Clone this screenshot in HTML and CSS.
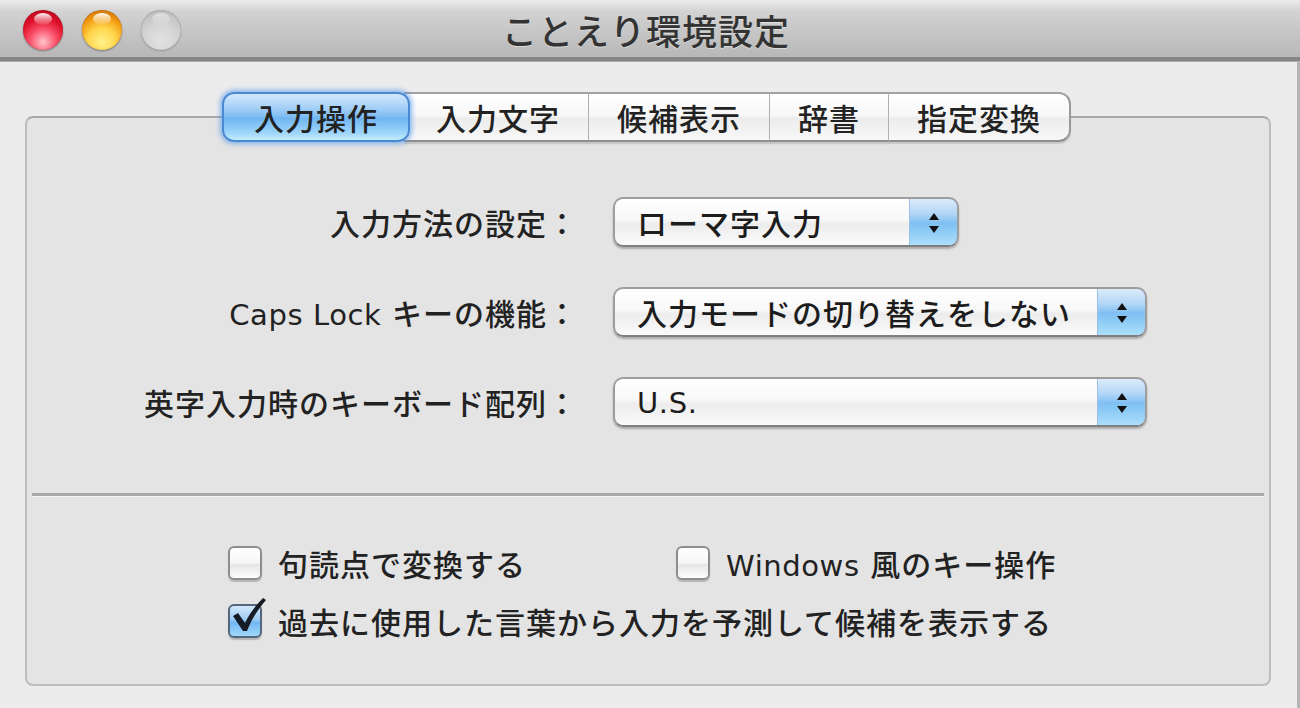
FILE: index.html
```html
<!DOCTYPE html>
<html lang="ja">
<head>
<meta charset="utf-8">
<title>ことえり環境設定</title>
<link rel="stylesheet" href="styles.css">
</head>
<body>
<div class="window">
  <div class="titlebar">
    <div class="lights">
      <span class="light red"></span>
      <span class="light yellow"></span>
      <span class="light grey"></span>
    </div>
    <div class="title">ことえり環境設定</div>
    <div class="spacer"></div>
  </div>
  <div class="content">
    <div class="tabs">
      <div class="tab active">入力操作</div>
      <div class="tab">入力文字</div>
      <div class="tab">候補表示</div>
      <div class="tab">辞書</div>
      <div class="tab last">指定変換</div>
    </div>
    <div class="box">
      <div class="form">
        <div class="label">入力方法の設定：</div>
        <div class="popup short">
          <span class="value">ローマ字入力</span>
          <span class="stepper"><svg viewBox="0 0 14 28" width="14" height="28"><path d="M7 4 L12 11 L2 11 Z M7 24 L12 17 L2 17 Z" fill="#111"/></svg></span>
        </div>
        <div class="label"><span class="latin">Caps Lock</span> キーの機能：</div>
        <div class="popup">
          <span class="value">入力モードの切り替えをしない</span>
          <span class="stepper"><svg viewBox="0 0 14 28" width="14" height="28"><path d="M7 4 L12 11 L2 11 Z M7 24 L12 17 L2 17 Z" fill="#111"/></svg></span>
        </div>
        <div class="label">英字入力時のキーボード配列：</div>
        <div class="popup">
          <span class="value"><span class="latin">U.S.</span></span>
          <span class="stepper"><svg viewBox="0 0 14 28" width="14" height="28"><path d="M7 4 L12 11 L2 11 Z M7 24 L12 17 L2 17 Z" fill="#111"/></svg></span>
        </div>
      </div>
      <div class="sep"></div>
      <div class="checks">
        <label class="check"><span class="cbox"></span><span>句読点で変換する</span></label>
        <label class="check"><span class="cbox"></span><span><span class="latin">Windows</span> 風のキー操作</span></label>
        <label class="check wide"><span class="cbox checked"><svg class="tick" viewBox="0 0 40 40" width="40" height="40"><path d="M5 18 L10 15 L17 25 C22 15 28 7 35 0 L38 2 C31 10 24 20 19 33 L15 33 Z" fill="#161b26"/></svg></span><span>過去に使用した言葉から入力を予測して候補を表示する</span></label>
      </div>
    </div>
  </div>
</div>
</body>
</html>
```

FILE: styles.css
```css
* { box-sizing: border-box; }
html, body { margin: 0; padding: 0; }
body {
  width: 1300px;
  height: 708px;
  overflow: hidden;
  background: #ececec;
  font-family: "DejaVu Sans", "Noto Sans CJK JP", sans-serif;
  color: #222;
}
.window {
  width: 1300px;
  height: 708px;
  display: flex;
  flex-direction: column;
  background: #ececec;
}
.titlebar {
  height: 61px;
  flex: none;
  display: grid;
  grid-template-columns: 1fr auto 1fr;
  align-items: center;
  background: linear-gradient(#ececec 0px, #e2e2e2 4px, #d2d2d2 12px, #c4c4c4 35px, #b8b8b8 56px);
  border-bottom: 4px solid #858585;
  box-shadow: 0 1px 0 #a9a9a9;
}
.lights {
  display: flex;
  gap: 19px;
  padding-left: 23px;
  padding-top: 3px;
}
.light {
  position: relative;
  width: 40px;
  height: 40px;
  border-radius: 50%;
  display: block;
}
.light::after {
  content: "";
  position: absolute;
  left: 11px;
  top: 3px;
  width: 18px;
  height: 12px;
  border-radius: 50%;
  background: linear-gradient(rgba(255,255,255,0.95), rgba(255,255,255,0.05));
}
.red {
  background: radial-gradient(circle at 50% 80%, #ffc4cb 0%, #f9506a 35%, #e0112b 62%, #a5000f 100%);
  box-shadow: 0 1px 2px rgba(0,0,0,0.35), inset 0 0 1px rgba(90,0,0,0.6);
}
.yellow {
  background: radial-gradient(circle at 50% 80%, #fff28c 0%, #ffd54a 38%, #f29a12 66%, #b55a00 100%);
  box-shadow: 0 1px 2px rgba(0,0,0,0.35), inset 0 0 1px rgba(100,50,0,0.6);
}
.grey {
  background: radial-gradient(circle at 50% 75%, #e2e2e2 0%, #d4d4d4 45%, #c2c2c2 75%, #9e9e9e 100%);
  box-shadow: 0 1px 2px rgba(0,0,0,0.2), inset 0 0 1px rgba(0,0,0,0.4);
}
.grey::after { opacity: 0.5; }
.title {
  font-family: "Noto Sans CJK JP", sans-serif;
  font-weight: 500;
  font-size: 35px;
  letter-spacing: 1px;
  color: #333;
  text-shadow: 0 1px 0 rgba(255,255,255,0.45);
  padding-top: 2px;
  margin-right: 8px;
}
.content {
  flex: 1;
  display: flex;
  flex-direction: column;
  padding: 31px 26px 22px 25px;
  border-right: 3px solid #b4b4b4;
}
.tabs {
  position: relative;
  z-index: 1;
  display: flex;
  justify-content: center;
  height: 50px;
  margin-bottom: -26px;
  margin-left: -3px;
}
.tab {
  height: 50px;
  display: flex;
  align-items: center;
  padding: 0 28px;
  font-family: "Noto Sans CJK JP", sans-serif;
  font-weight: 500;
  font-size: 30px;
  letter-spacing: 1px;
  color: #222;
  background: linear-gradient(#ffffff 0%, #f7f7f7 48%, #ececec 52%, #f8f8f8 100%);
  border-top: 2px solid #a2a2a2;
  border-bottom: 2px solid #8e8e8e;
  border-right: 1px solid #b3b3b3;
  box-shadow: 0 2px 1px rgba(0,0,0,0.12);
}
.tab.active {
  border: 2px solid #4a8ad4;
  border-radius: 12px;
  background: linear-gradient(#d2e8fb 0%, #a5d0f7 30%, #7ebcf2 50%, #6fb4f0 52%, #9fd6fb 85%, #c6ecfd 100%);
  box-shadow: 0 0 5px 2px rgba(80, 150, 235, 0.65);
  padding: 0 30px;
  position: relative;
  z-index: 1;
  margin-right: -6px;
}
.tab.active + .tab { padding-left: 32px; }
.tab.last {
  border-right: 2px solid #9a9a9a;
  border-radius: 0 12px 12px 0;
}
.box {
  flex: 1;
  display: flex;
  flex-direction: column;
  background: #e4e4e4;
  border: 2px solid #bcbcbc;
  border-top-color: #a9a9a9;
  border-radius: 8px;
  padding-top: 79px;
}
.form {
  display: grid;
  grid-template-columns: 548px auto;
  column-gap: 38px;
  row-gap: 40px;
  align-items: center;
  justify-items: start;
}
.label {
  justify-self: end;
  font-size: 30px;
  font-weight: 500;
  letter-spacing: 1px;
  white-space: nowrap;
  color: #222;
  margin-right: -3px;
}
.latin {
  font-family: "DejaVu Sans", sans-serif;
  font-weight: 400;
  font-size: 29px;
  letter-spacing: 0.6px;
}
.popup {
  width: 534px;
  height: 50px;
  display: flex;
  align-items: center;
  border: 2px solid #9d9d9d;
  border-bottom-color: #7f7f7f;
  border-radius: 10px;
  background: linear-gradient(#ffffff 0%, #f8f8f8 45%, #ececec 55%, #fbfbfb 100%);
  box-shadow: 0 2px 2px rgba(0,0,0,0.25);
  overflow: hidden;
}
.popup.short { width: 346px; }
.value {
  flex: 1;
  padding-left: 22px;
  font-size: 30px;
  font-weight: 500;
  letter-spacing: 1px;
  white-space: nowrap;
  color: #1c1c1c;
}
.stepper {
  width: 50px;
  height: 100%;
  display: flex;
  align-items: center;
  justify-content: center;
  background: linear-gradient(#dcebf9 0%, #b4d7f7 30%, #80bff3 50%, #86c6f4 60%, #b0e2fc 100%);
  border-left: 1px solid #9cc0e4;
  border-top: 2px solid #5a62c8;
  border-right: 2px solid #5560c8;
  margin: -2px -2px -2px 0;
  height: 50px;
  border-radius: 0 10px 10px 0;
}
.sep {
  height: 3px;
  margin: 66px 5px 0 5px;
  background: #a9a9a9;
  box-shadow: 0 1px 0 #f2f2f2;
}
.checks {
  display: grid;
  grid-template-columns: 448px auto;
  row-gap: 24px;
  padding: 50px 0 0 201px;
}
.check {
  display: flex;
  align-items: center;
  gap: 16px;
  height: 34px;
  font-size: 30px;
  font-weight: 500;
  letter-spacing: 1px;
  white-space: nowrap;
  color: #222;
}
.check.wide { grid-column: 1 / span 2; }
.cbox {
  position: relative;
  flex: none;
  width: 34px;
  height: 34px;
  border: 2px solid #8e8e8e;
  border-radius: 6px;
  background: linear-gradient(#ffffff 0%, #f6f6f6 50%, #e6e6e6 55%, #fdfdfd 100%);
  box-shadow: 0 2px 1px rgba(0,0,0,0.2);
}
.cbox.checked {
  border-color: #56667e;
  background: linear-gradient(#d4e7fb 0%, #9ccbf4 45%, #72b6f1 55%, #9fd9fb 100%);
}
.tick {
  position: absolute;
  left: -2px;
  top: -8px;
  width: 40px;
  height: 40px;
}
```
